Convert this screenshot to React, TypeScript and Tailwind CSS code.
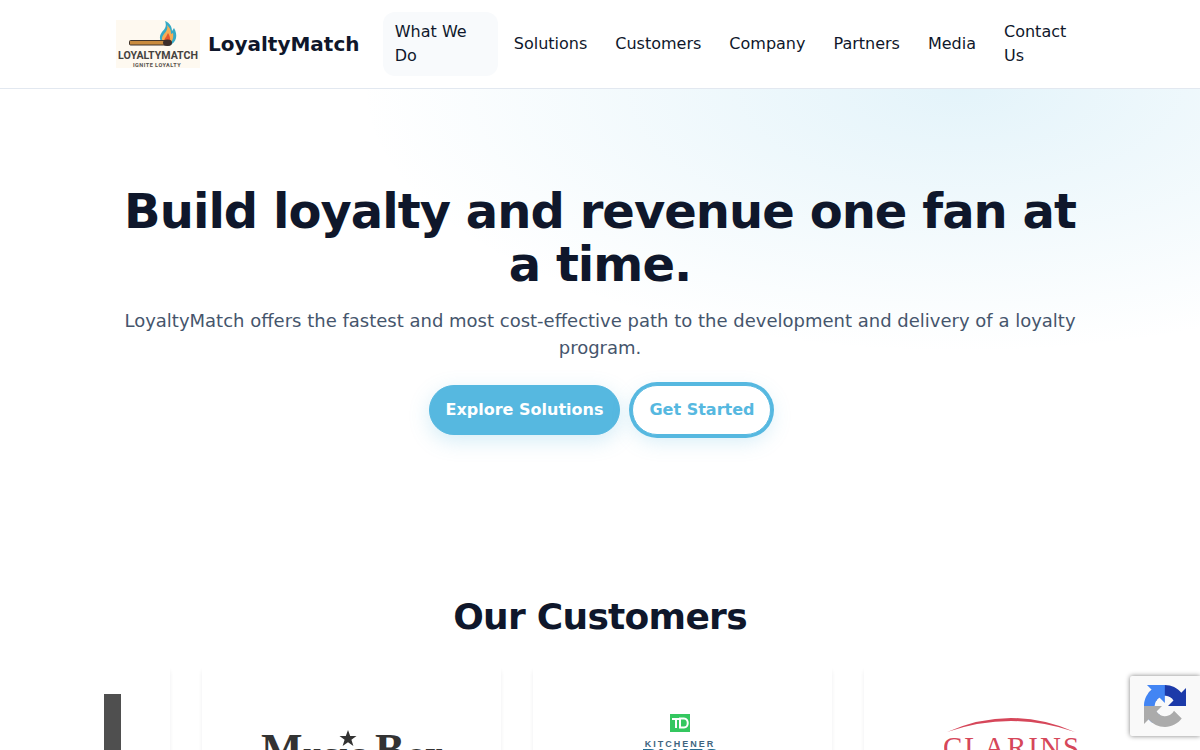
import { ReactNode } from "react";

const NAV = [
  { label: "What We Do", className: "w-[115px] bg-slate-50" },
  { label: "Solutions", className: "" },
  { label: "Customers", className: "" },
  { label: "Company", className: "" },
  { label: "Partners", className: "" },
  { label: "Media", className: "" },
  { label: "Contact Us", className: "w-[92px]" },
];

function BrandLogo() {
  return (
    <svg viewBox="0 0 84 48" className="h-12 w-[84px] shrink-0" role="img" aria-label="LoyaltyMatch, Ignite Loyalty">
      <rect width="84" height="48" fill="#fef9f0" />
      <path d="M50 25c-6-2-8-8-4-13 3-3 5-6 3-11 5 2 7 6 7 10l2-3c4 7 3 14-5 18z" fill="#35aac6" />
      <path d="M50 25c-5-4-5-7-2-11 3-3 4-6 3-9 4 4 4 6 4 9l2-1c1 5-1 9-4 12z" fill="#f6ad55" />
      <path d="M50 25c-3-3-2-6 0-8l2-4c3 5 3 9 0 12z" fill="#e4572e" />
      <rect x="13.5" y="20.5" width="38" height="4.5" rx="1" fill="#c98b3e" stroke="#41352c" />
      <ellipse cx="51.5" cy="22.8" rx="4.5" ry="3.3" fill="#3c2d2a" />
      <text x="42" y="38.5" textAnchor="middle" fontFamily="Roboto, sans-serif" fontWeight="700" fontSize="10.6" fill="#45423f">LOYALTYMATCH</text>
      <text x="41" y="46.500" textAnchor="middle" fontFamily="Roboto, sans-serif" fontWeight="700" fontSize="5.5" letterSpacing="0.5" fill="#55504c">IGNITE LOYALTY</text>
    </svg>
  );
}

function MusicBoxLogo() {
  return (
    <svg viewBox="0 0 200 60" className="w-[200px]" role="img" aria-label="Music Box">
      <text y="34" fontFamily="Liberation Serif, serif" fontWeight="700" fontSize="44" fill="#333">
        <tspan x="9">M</tspan>
        <tspan x="51" fontFamily="DejaVu Serif, serif" fontSize="28">usıc</tspan>
        <tspan x="123">B</tspan>
        <tspan x="155" fontFamily="DejaVu Serif, serif" fontSize="28">ox</tspan>
      </text>
      <path d="M96 0l2.2 6h6.3l-5.1 3.8 2 6.2-5.400-3.7-5.4 3.700 2-6.200L87.500 6h6.300z" fill="#333" />
    </svg>
  );
}

function BluesLogo() {
  return (
    <svg viewBox="3 0 80 80" className="w-20" role="img" aria-label="TD Kitchener Blues Festival">
      <rect x="30" y="0" width="20" height="18" fill="#34c75f" />
      <path d="M32 5h9M36 4v10M40 4.500h4c5 0 5 9 0 9h-4z" fill="none" stroke="#fff" strokeWidth="2" />
      <text x="40" y="33" textAnchor="middle" fontFamily="Liberation Sans, sans-serif" fontWeight="700" fontSize="9" letterSpacing="2" fill="#3f6580">KITCHENER</text>
      <text x="40" y="52" textAnchor="middle" fontFamily="Liberation Sans, sans-serif" fontWeight="700" fontSize="23" fill="#286d91">BLUES</text>
    </svg>
  );
}

function ClarinsLogo() {
  return (
    <svg viewBox="3 0 140 60" className="w-[140px]" role="img" aria-label="Clarins">
      <path d="M6 15Q70-13 134 15Q70-7 6 15z" fill="#d6475a" />
      <text x="71" y="40" textAnchor="middle" fontFamily="Liberation Serif, serif" fontSize="29" letterSpacing="2" fill="#d6475a">CLARINS</text>
    </svg>
  );
}

function RecaptchaIcon() {
  return (
    <svg viewBox="0 0 64 64" className="size-[42px]" aria-hidden="true">
      <path d="M64 31.955c0-.46-.012-.918-.032-1.373V4.639l-7.17 7.173C50.933 4.63 42.01.043 32.013.043c-10.404 0-19.647 4.966-25.488 12.659l11.754 11.882c1.152-2.131 2.788-3.961 4.766-5.347 2.058-1.606 4.973-2.919 8.967-2.919.482 0 .855.056 1.129.163 4.949.391 9.239 3.122 11.765 7.087l-8.32 8.321c10.538-.041 22.443-.066 27.414.066" fill="#1c3aa9" />
      <path d="M31.862.094c-.459 0-.918.012-1.373.032H4.546l7.173 7.17C4.537 13.163-.05 22.087-.05 32.083c0 10.404 4.966 19.647 12.659 25.488l11.882-11.754c-2.131-1.152-3.961-2.788-5.347-4.766-1.606-2.058-2.919-4.973-2.919-8.967 0-.482.056-.855.163-1.129.391-4.949 3.122-9.239 7.087-11.765l8.321 8.32c-.041-10.538-.066-22.443.066-27.416" fill="#4285f4" />
      <path d="M0 31.955c0 .46.012.918.032 1.373v25.943l7.17-7.173C13.07 59.28 21.994 63.867 31.99 63.867c10.404 0 19.647-4.966 25.488-12.659L45.724 39.326c-1.152 2.131-2.788 3.961-4.766 5.347-2.058 1.606-4.973 2.919-8.967 2.919-.482 0-.855-.056-1.129-.163-4.949-.391-9.239-3.122-11.765-7.087l8.32-8.321C16.879 32.062 4.974 32.087 0 31.955" fill="#ababab" />
    </svg>
  );
}

function CustomerCard({ children }: { children?: ReactNode }) {
  return (
    <li className="flex h-44 w-[299px] shrink-0 items-start justify-center rounded-sm bg-white shadow-[0_4px_4px_rgba(15,23,42,0.07)]">
      {children}
    </li>
  );
}

export default function App() {
  return (
    <div className="min-h-screen overflow-x-hidden bg-white font-['DejaVu_Sans',sans-serif] text-slate-900">
      <header className="border-b border-slate-200">
        <div className="mx-auto flex max-w-[968px] items-center justify-between py-3">
          <a href="#" className="flex items-center gap-2 text-xl font-bold">
            <BrandLogo />
            LoyaltyMatch
          </a>
          <nav aria-label="Main">
            <ul className="flex items-center gap-1">
              {NAV.map((item) => (
                <li key={item.label}>
                  <a href="#" className={`block rounded-xl px-3 py-2 text-base ${item.className}`}>
                    {item.label}
                  </a>
                </li>
              ))}
            </ul>
          </nav>
        </div>
      </header>

      <main>
        <section className="bg-[radial-gradient(1000px_440px_at_80%_0%,rgba(86,184,224,0.16),transparent_60%)] px-6 py-24 text-center">
          <div className="mx-auto max-w-[968px]">
            <h1 className="text-5xl leading-[53px] font-bold tracking-[-0.02em]">
              Build loyalty and revenue one fan at a time.
            </h1>
            <p className="mt-4 text-lg leading-[27px] text-slate-600">
              LoyaltyMatch offers the fastest and most cost-effective path to the development and delivery of a loyalty program.
            </p>
            <div className="mt-6 flex items-center justify-center gap-3">
              <a href="#" className="rounded-full border border-[#56b8e0] bg-[#56b8e0] px-4 py-3 font-bold text-white shadow-[0_6px_20px_rgba(86,184,224,0.25)]">
                Explore Solutions
              </a>
              <a href="#" className="rounded-full border border-[#56b8e0] bg-white px-4 py-3 font-bold text-[#56b8e0] shadow-[0_0_0_3px_#56b8e0,0_6px_20px_rgba(86,184,224,0.25)]">
                Get Started
              </a>
            </div>
          </div>
        </section>

        <section className="py-16">
          <h2 className="text-center text-4xl leading-[43px] font-bold tracking-[-0.02em]">Our Customers</h2>
          <div className="mx-auto mt-7 max-w-[992px] overflow-hidden pb-2">
            <ul className="-ml-[233px] flex gap-8">
              <CustomerCard>
                <svg viewBox="0 0 200 110" className="mt-7 w-[200px]" aria-hidden="true">
                  <rect width="200" height="110" fill="#4f4f4f" />
                </svg>
              </CustomerCard>
              <CustomerCard>
                <div className="pt-16"><MusicBoxLogo /></div>
              </CustomerCard>
              <CustomerCard>
                <div className="pt-12"><BluesLogo /></div>
              </CustomerCard>
              <CustomerCard>
                <div className="pt-[51px]"><ClarinsLogo /></div>
              </CustomerCard>
            </ul>
          </div>
        </section>
      </main>

      <div className="fixed right-0 bottom-3.5 flex h-[60px] w-[70px] items-center justify-center rounded-l-[2px] bg-[#f9f9f9] shadow-[0_0_5px_gray]">
        <RecaptchaIcon />
      </div>
    </div>
  );
}
